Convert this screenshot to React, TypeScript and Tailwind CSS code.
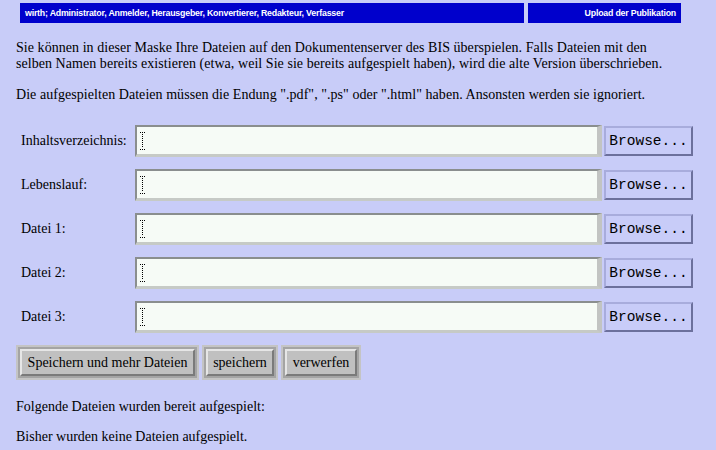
const fields = ["Inhaltsverzeichnis:", "Lebenslauf:", "Datei 1:", "Datei 2:", "Datei 3:"];

function Caret() {
  const dots = [];
  for (let y = 2; y < 16; y += 2) dots.push(<rect key={y} x={2} y={y} width={1} height={1} />);
  return (
    <svg width="5" height="18" viewBox="0 0 5 18" className="fill-black">
      <rect x={0} y={0} width={1} height={1} />
      <rect x={4} y={0} width={1} height={1} />
      <rect x={2} y={0} width={1} height={1} />
      {dots}
      <rect x={0} y={17} width={1} height={1} />
      <rect x={4} y={17} width={1} height={1} />
      <rect x={2} y={17} width={1} height={1} />
    </svg>
  );
}

function OldButton({ label, w }: { label: string; w: string }) {
  return (
    <button
      type="button"
      className={`${w} h-[35px] border-2 border-[#c4c4c4] bg-[#a4a4a4] p-[2px]`}
    >
      <span className="flex h-full w-full items-center justify-center border-2 border-t-[#e6e6e6] border-l-[#e6e6e6] border-b-[#7a7a7a] border-r-[#7a7a7a] bg-[#c0c0c0] text-[14px]">
        {label}
      </span>
    </button>
  );
}

export default function App() {
  return (
    <div className="min-h-[450px] bg-[#c8ccf8] pt-[3px] font-['Liberation_Serif',serif] text-[14px] leading-[16px] text-black">
      <div className="flex gap-[4px] pl-[20px] font-['Liberation_Sans',sans-serif] text-[8.8px] font-bold tracking-[-0.2px] text-white">
        <div className="flex h-[20px] w-[504px] items-center bg-[#0000cc] px-[5px]">
          wirth; Administrator, Anmelder, Herausgeber, Konvertierer, Redakteur, Verfasser
        </div>
        <div className="flex h-[20px] w-[153px] items-center justify-end bg-[#0000cc] px-[5px]">
          Upload der Publikation
        </div>
      </div>

      <div className="px-[16px] tracking-[0.05px]">
        <p className="mt-[17px]">
          Sie können in dieser Maske Ihre Dateien auf den Dokumentenserver des BIS überspielen. Falls Dateien mit den
          <br />
          selben Namen bereits existieren (etwa, weil Sie sie bereits aufgespielt haben), wird die alte Version überschrieben.
        </p>
        <p className="mt-[15px]">
          Die aufgespielten Dateien müssen die Endung ".pdf", ".ps" oder ".html" haben. Ansonsten werden sie ignoriert.
        </p>
      </div>

      <div className="mt-[22px] flex flex-col gap-[12px] pl-[21px]">
        {fields.map((f) => (
          <div key={f} className="flex items-center">
            <label className="w-[114px]">{f}</label>
            <div className="flex h-[32px] w-[467px] items-center border-t-2 border-l-2 border-b-[3px] border-r-[5px] border-t-[#8a8e8e] border-l-[#8a8e8e] border-b-[#c6cac6] border-r-[#c2c4c2] bg-[#f6fbf6] pl-[3px]">
              <Caret />
            </div>
            <button
              type="button"
              className="ml-[2px] h-[30px] w-[89px] border-2 border-t-[#a8acdc] border-l-[#a8acdc] border-b-[#6c709c] border-r-[#6c709c] bg-[#c8ccf8] font-['Liberation_Mono',monospace] text-[14.5px]"
            >
              Browse...
            </button>
          </div>
        ))}
      </div>

      <div className="mt-[12px] flex gap-[3px] pl-[16px]">
        <OldButton label="Speichern und mehr Dateien" w="w-[183px]" />
        <OldButton label="speichern" w="w-[76px]" />
        <OldButton label="verwerfen" w="w-[80px]" />
      </div>

      <div className="px-[16px]">
        <p className="mt-[19px]">Folgende Dateien wurden bereit aufgespielt:</p>
        <p className="mt-[14px]">Bisher wurden keine Dateien aufgespielt.</p>
      </div>
    </div>
  );
}
